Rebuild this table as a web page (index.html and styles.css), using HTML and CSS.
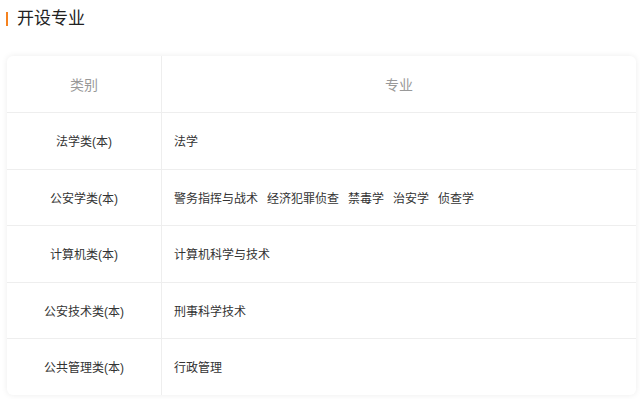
FILE: index.html
```html
<!DOCTYPE html>
<html lang="zh-CN">
<head>
<meta charset="utf-8">
<title>开设专业</title>
<link rel="stylesheet" href="styles.css">
</head>
<body>
<div class="page">
  <h2 class="title">开设专业</h2>
  <div class="card">
    <div class="row head">
      <div class="cat">类别</div>
      <div class="maj">专业</div>
    </div>
    <div class="row">
      <div class="cat">法学类(本)</div>
      <div class="maj"><span>法学</span></div>
    </div>
    <div class="row">
      <div class="cat">公安学类(本)</div>
      <div class="maj"><span>警务指挥与战术</span><span>经济犯罪侦查</span><span>禁毒学</span><span>治安学</span><span>侦查学</span></div>
    </div>
    <div class="row">
      <div class="cat">计算机类(本)</div>
      <div class="maj"><span>计算机科学与技术</span></div>
    </div>
    <div class="row">
      <div class="cat">公安技术类(本)</div>
      <div class="maj"><span>刑事科学技术</span></div>
    </div>
    <div class="row">
      <div class="cat">公共管理类(本)</div>
      <div class="maj"><span>行政管理</span></div>
    </div>
  </div>
</div>
</body>
</html>
```

FILE: styles.css
```css
html, body {
  margin: 0;
  padding: 0;
  background: #ffffff;
}
body {
  font-family: "Liberation Sans", "Noto Sans CJK SC", sans-serif;
  color: #333333;
}
.page {
  width: 640px;
  height: 399px;
  overflow: hidden;
  padding: 8px 4px 0 7px;
  box-sizing: border-box;
}
.title {
  margin: 0 0 0 -1px;
  padding-left: 11px;
  font-size: 17px;
  font-weight: normal;
  line-height: 21px;
  height: 21px;
  color: #222222;
  display: flex;
  align-items: center;
  gap: 0;
}
.title::before {
  content: "";
  width: 2px;
  height: 14px;
  background: #f5821f;
  margin-left: -11px;
  margin-right: 9px;
}
.card {
  margin-top: 26.5px;
  background: #ffffff;
  border-radius: 6px;
  box-shadow: 0 0 6px rgba(0, 0, 0, 0.08);
  overflow: hidden;
}
.row {
  display: flex;
  height: 56.5px;
  box-sizing: border-box;
  border-top: 1px solid #eeeeee;
  font-size: 12px;
}
.row.head {
  border-top: none;
  height: 56.5px;
  font-size: 14px;
  color: #999999;
}
.cat {
  width: 154px;
  flex: none;
  border-right: 1px solid #eeeeee;
  display: flex;
  align-items: center;
  justify-content: center;
}
.maj {
  flex: 1;
  display: flex;
  align-items: center;
  padding-left: 12px;
}
.head .maj {
  justify-content: center;
  padding-left: 0;
}
.maj span {
  margin-right: 9px;
}
```
